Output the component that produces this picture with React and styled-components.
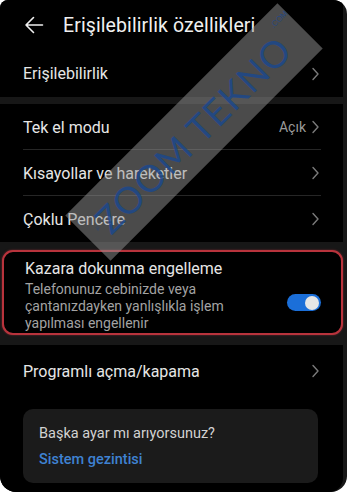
import React from 'react';
import styled, { createGlobalStyle } from 'styled-components';

const GlobalStyle = createGlobalStyle`
  html, body {
    margin: 0;
    padding: 0;
    background: #ffffff;
  }
  body {
    font-family: Roboto, "Noto Sans", "Liberation Sans", sans-serif;
  }
`;

const Screen = styled.div`
  position: relative;
  width: 347px;
  height: 492px;
  background: #171717;
  border-radius: 8px 14px 16px 16px;
  overflow: hidden;
  display: flex;
  flex-direction: column;
  gap: 7px;
  padding-right: 4px;
  box-sizing: border-box;
`;

const Card = styled.div`
  background: #000;
  display: flex;
  flex-direction: column;
  border-radius: ${(p) => (p.$last ? '0 0 14px 14px' : '0')};
  flex: ${(p) => (p.$grow ? '1' : 'none')};
`;

const Header = styled.div`
  height: 50px;
  display: flex;
  align-items: center;
  padding-left: 24px;
  gap: 19px;
`;

const Title = styled.h1`
  margin: 0;
  font-size: 19.5px;
  font-weight: 400;
  color: #f0f0f0;
  letter-spacing: 0.1px;
`;

const Row = styled.div`
  height: ${(p) => p.$h || 46}px;
  display: flex;
  align-items: center;
  padding: 0 23px;
  position: relative;
  &::after {
    content: '';
    display: ${(p) => (p.$divider ? 'block' : 'none')};
    position: absolute;
    left: 23px;
    right: 22px;
    bottom: 0;
    height: 1px;
    background: #262626;
  }
`;

const Label = styled.span`
  flex: 1;
  font-size: 16px;
  color: #e6e6e6;
`;

const Value = styled.span`
  font-size: 14px;
  color: #9a9a9a;
  margin-right: 5px;
`;

const HighlightCard = styled.div`
  background: #000;
  border: 2px solid #b8333c;
  border-radius: 11px;
  margin: 1px 0 3px 2px;
  height: 85px;
  box-sizing: border-box;
  display: flex;
  align-items: flex-start;
  padding: 7px 20px 0 21px;
  box-shadow: 0 0 2px rgba(200, 60, 70, 0.6);
`;

const TextBlock = styled.div`
  flex: 1;
  display: flex;
  flex-direction: column;
`;

const SubText = styled.p`
  margin: 3px 0 0;
  font-size: 14px;
  line-height: 17px;
  color: #a3a3a3;
  width: 230px;
`;

const Toggle = styled.div`
  width: 34px;
  height: 17px;
  border-radius: 9px;
  background: #1b6fd9;
  position: relative;
  margin-top: 35px;
  &::after {
    content: '';
    position: absolute;
    right: 2px;
    top: 1.5px;
    width: 14px;
    height: 14px;
    border-radius: 50%;
    background: #e6e6e6;
  }
`;

const HintBox = styled.div`
  margin: 12px 25px 0 23px;
  height: 74px;
  background: #1b1b1b;
  border-radius: 10px;
  padding: 16px 16px 0;
  box-sizing: border-box;
  display: flex;
  flex-direction: column;
  gap: 9px;
`;

const HintText = styled.span`
  font-size: 14.5px;
  color: #d2d2d2;
`;

const HintLink = styled.span`
  font-size: 14.5px;
  font-weight: 500;
  color: #3f82d2;
`;

const Watermark = styled.div`
  position: absolute;
  left: 44px;
  top: 100px;
  width: 300px;
  height: 64px;
  transform: rotate(-45deg);
  background: rgba(150, 150, 150, 0.5);
  display: flex;
  align-items: center;
  padding-left: 12px;
  box-sizing: border-box;
  gap: 2px;
  pointer-events: none;
`;

const MarkText = styled.span`
  font-family: Lato, "Liberation Sans", sans-serif;
  font-size: 37px;
  font-weight: 400;
  letter-spacing: 1px;
  color: rgba(28, 72, 140, 0.85);
  white-space: nowrap;
`;

const MarkDot = styled.span`
  font-family: "Liberation Sans", sans-serif;
  font-size: 8px;
  color: rgba(28, 72, 140, 0.8);
  align-self: flex-start;
  margin-top: 8px;
`;

const BackArrow = () => (
  <svg width="20" height="20" viewBox="0 0 20 20" fill="none">
    <path d="M18.5 10H2 M9.5 2.5 L2 10 L9.5 17.5" stroke="#f0f0f0" strokeWidth="1.6" strokeLinecap="round" strokeLinejoin="round" />
  </svg>
);

const Chevron = () => (
  <svg width="9" height="14" viewBox="0 0 9 14" fill="none">
    <path d="M2 1.5 L7 7 L2 12.5" stroke="#7a7a7a" strokeWidth="1.4" strokeLinecap="round" strokeLinejoin="round" />
  </svg>
);

const Magnifier = () => (
  <svg width="30" height="36" viewBox="0 0 30 36" fill="none">
    <circle cx="17" cy="15" r="10" stroke="rgba(28,72,140,0.85)" strokeWidth="3" />
    <path d="M10 22 L3 32" stroke="rgba(28,72,140,0.85)" strokeWidth="4" strokeLinecap="round" />
  </svg>
);

export default function App() {
  return (
    <>
      <GlobalStyle />
      <Screen>
        <Card>
          <Header>
            <BackArrow />
            <Title>Erişilebilirlik özellikleri</Title>
          </Header>
          <Row $h={47}>
            <Label>Erişilebilirlik</Label>
            <Chevron />
          </Row>
        </Card>
        <Card>
          <Row $divider>
            <Label>Tek el modu</Label>
            <Value>Açık</Value>
            <Chevron />
          </Row>
          <Row $divider>
            <Label>Kısayollar ve hareketler</Label>
            <Chevron />
          </Row>
          <Row>
            <Label>Çoklu Pencere</Label>
            <Chevron />
          </Row>
        </Card>
        <HighlightCard>
          <TextBlock>
            <Label>Kazara dokunma engelleme</Label>
            <SubText>Telefonunuz cebinizde veya çantanızdayken yanlışlıkla işlem yapılması engellenir</SubText>
          </TextBlock>
          <Toggle />
        </HighlightCard>
        <Card $grow $last>
          <Row $h={52}>
            <Label>Programlı açma/kapama</Label>
            <Chevron />
          </Row>
          <HintBox>
            <HintText>Başka ayar mı arıyorsunuz?</HintText>
            <HintLink>Sistem gezintisi</HintLink>
          </HintBox>
        </Card>
        <Watermark>
          <Magnifier />
          <MarkText>ZOOM TEKNO</MarkText>
          <MarkDot>.COM</MarkDot>
        </Watermark>
      </Screen>
    </>
  );
}
